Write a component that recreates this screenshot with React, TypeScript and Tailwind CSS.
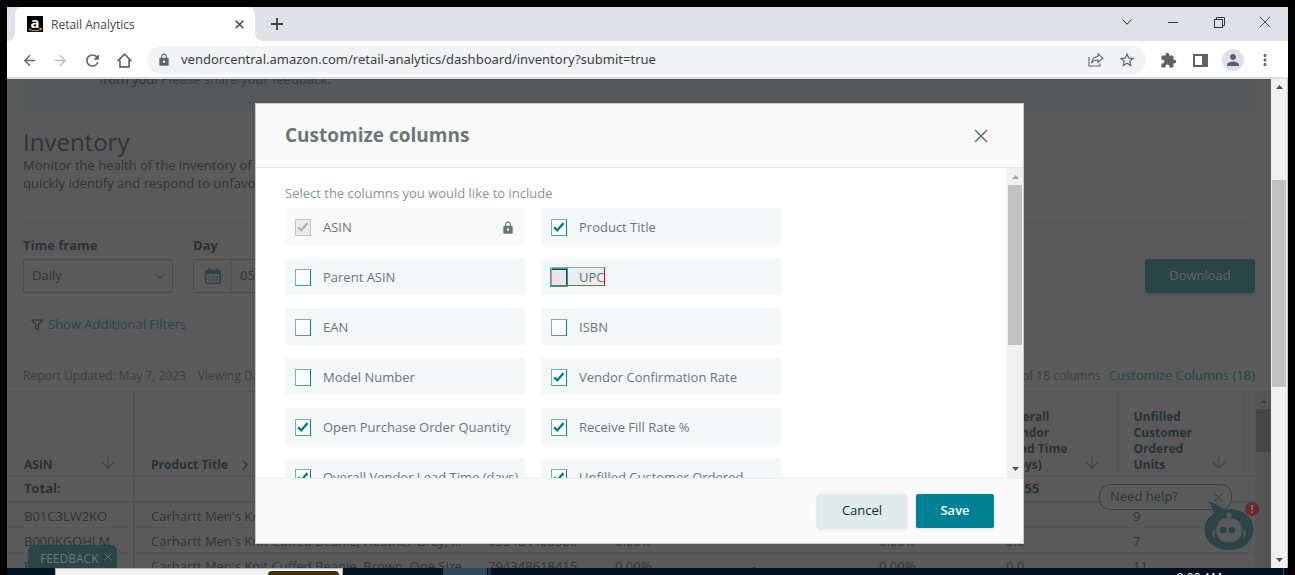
import React from "react";
import {
  MdArrowBack,
  MdArrowForward,
  MdRefresh,
  MdLock,
  MdStarBorder,
  MdExtension,
  MdPerson,
  MdMoreVert,
} from "react-icons/md";

type Option = { label: string; checked?: boolean; locked?: boolean; focused?: boolean };

const options: Option[] = [
  { label: "ASIN", checked: true, locked: true },
  { label: "Product Title", checked: true },
  { label: "Parent ASIN" },
  { label: "UPC", focused: true },
  { label: "EAN" },
  { label: "ISBN" },
  { label: "Model Number" },
  { label: "Vendor Confirmation Rate", checked: true },
  { label: "Open Purchase Order Quantity", checked: true },
  { label: "Receive Fill Rate %", checked: true },
  { label: "Overall Vendor Lead Time (days)", checked: true },
  { label: "Unfilled Customer Ordered", checked: true },
];

const rows: string[][] = [
  ["B01C3LW2KO", "Carhartt Men's Knit Cuffed Beanie", "", "", "", "", "", "9"],
  ["B000KGOHLM", "Carhartt Men's Knit Cuffed Beanie, Heather Grey, ...", "035484468586", "0.00%", "", "0.00%", "0.0", "7"],
  ["B002G9UDYG", "Carhartt Men's Knit Cuffed Beanie, Brown, One Size", "794348618415", "0.00%", "-", "0.00%", "0.0", "11"],
];

function Caret({ down = false, className = "" }: { down?: boolean; className?: string }) {
  return (
    <svg viewBox="0 0 7 4" className={`h-1 w-[7px] ${className}`} fill="currentColor" aria-hidden="true">
      {down ? <path d="M0 0h7L3.5 4z" /> : <path d="M0 4h7L3.5 0z" />}
    </svg>
  );
}

function Cross({ className = "" }: { className?: string }) {
  return (
    <svg viewBox="0 0 14 14" className={className} fill="none" stroke="currentColor" aria-hidden="true">
      <path d="M1 1l12 12M13 1L1 13" />
    </svg>
  );
}

function SortArrow() {
  return (
    <svg viewBox="0 0 14 14" className="mb-1 size-[14px] shrink-0 text-[#3f4647]" fill="none" stroke="currentColor" strokeWidth="1.2" aria-hidden="true">
      <path d="M7 .5v12.5M.8 7L7 13.2 13.2 7" />
    </svg>
  );
}

function TabStrip() {
  return (
    <div className="flex h-[34px] shrink-0 items-stretch bg-[#dee1e6]">
      <div className="relative ml-2 flex w-60 items-center rounded-t-lg bg-white pr-2 pl-3">
        <svg viewBox="0 0 8 8" className="absolute bottom-0 -left-2 size-2" fill="#fff" aria-hidden="true">
          <path d="M8 0v8H0a8 8 0 0 0 8-8z" />
        </svg>
        <svg viewBox="0 0 8 8" className="absolute -right-2 bottom-0 size-2" fill="#fff" aria-hidden="true">
          <path d="M0 0v8h8a8 8 0 0 1-8-8z" />
        </svg>
        <span className="relative flex size-4 items-center justify-center bg-black text-[15px] leading-none font-bold text-white">
          <span className="pb-1">a</span>
          <svg viewBox="0 0 16 16" className="absolute inset-0 size-4" fill="none" stroke="#f19a2c" strokeWidth="1.1" aria-hidden="true">
            <path d="M2 12.800c3.500 2.600 8.500 2.600 12 .3M12.200 12.300l2.200.2-.8 2" />
          </svg>
        </span>
        <span className="ml-2 grow pt-0.5 text-xs text-[#45494d]">Retail Analytics</span>
        <button type="button" aria-label="Close tab" className="flex size-4 items-center justify-center text-[#3c4043]">
          <Cross className="size-[9px] stroke-[2.2]" />
        </button>
      </div>
      <button type="button" aria-label="New tab" className="ml-3 flex w-5 items-center justify-center text-[#3c4043]">
        <svg viewBox="0 0 12 12" className="size-3" stroke="currentColor" strokeWidth="1.8" aria-hidden="true">
          <path d="M6 0v12M0 6h12" />
        </svg>
      </button>
      <div className="ml-auto flex items-center pb-1 text-[#33363a]">
        <button type="button" aria-label="Search tabs" className="flex w-[46px] justify-center">
          <svg viewBox="0 0 10 6" className="h-1.5 w-2.5" fill="none" stroke="currentColor" aria-hidden="true">
            <path d="M.5.5L5 5.300 9.500.5" />
          </svg>
        </button>
        <button type="button" aria-label="Minimize" className="flex w-[46px] justify-center">
          <span className="h-px w-2.5 bg-[#33363a]" />
        </button>
        <button type="button" aria-label="Restore" className="flex w-[46px] justify-center">
          <svg viewBox="0 0 11 11" className="size-[11px]" fill="none" stroke="currentColor" aria-hidden="true">
            <rect x=".5" y="2.500" width="8" height="8" />
            <path d="M2.500 2.500v-2h8v8h-2" />
          </svg>
        </button>
        <button type="button" aria-label="Close window" className="flex w-[46px] justify-center">
          <Cross className="size-3" />
        </button>
      </div>
    </div>
  );
}

function Toolbar() {
  return (
    <div className="flex h-[38px] shrink-0 items-center border-b-2 border-[#dcdddf] bg-white pt-0.5 pr-4 pl-[14px] text-[#5f6368]">
      <div className="flex items-center gap-4">
        <button type="button" aria-label="Back"><MdArrowBack className="size-[17px]" /></button>
        <button type="button" aria-label="Forward" className="-ml-0.5 text-[#b9bbbe]"><MdArrowForward className="size-[17px]" /></button>
        <button type="button" aria-label="Reload" className="-mx-0.5"><MdRefresh className="size-[19px]" /></button>
        <button type="button" aria-label="Home">
          <svg viewBox="0 0 16 16" className="size-[17px]" fill="none" stroke="currentColor" strokeWidth="1.500" aria-hidden="true">
            <path d="M1.500 8.500L8 2l6.500 6.500M3.700 7v7h8.600V7" />
          </svg>
        </button>
      </div>
      <div className="ml-[14px] flex h-7 grow items-center rounded-full bg-[#f1f3f4] px-2.5">
        <MdLock className="size-[14px]" />
        <input
          aria-label="Address"
          readOnly
          value="vendorcentral.amazon.com/retail-analytics/dashboard/inventory?submit=true"
          className="ml-2.5 grow bg-transparent font-['Noto_Sans',sans-serif] text-[13px] text-[#3c4043] outline-none"
        />
        <button type="button" aria-label="Share" className="mr-3.5">
          <svg viewBox="0 0 16 16" className="size-4" fill="none" stroke="currentColor" strokeWidth="1.100" aria-hidden="true">
            <path d="M1 5v9h11v-2.500M10 2l5 4.200-5 4.200V8C7 8 5 9 3.500 11.300 4 7.500 6.500 4.700 10 4.300z" />
          </svg>
        </button>
        <button type="button" aria-label="Bookmark"><MdStarBorder className="size-[18px]" /></button>
      </div>
      <div className="ml-3.5 flex items-center gap-4">
        <button type="button" aria-label="Extensions"><MdExtension className="size-[17px]" /></button>
        <button type="button" aria-label="Side panel">
          <svg viewBox="0 0 15 15" className="size-[15px]" aria-hidden="true">
            <path fill="currentColor" fillRule="evenodd" d="M0 1h15v13H0zM2 3v9h7V3z" />
          </svg>
        </button>
        <button type="button" aria-label="Profile" className="-mx-0.5 flex size-[22px] items-center justify-center rounded-full bg-[#dee1e6] text-[#56607a]">
          <MdPerson className="size-[18px]" />
        </button>
        <button type="button" aria-label="Menu" className="-mx-0.5"><MdMoreVert className="size-[18px]" /></button>
      </div>
    </div>
  );
}

function DataTable() {
  return (
    <div className="flex h-[200px] border-t border-[#525454]">
      <table className="w-full grow table-fixed border-collapse self-start text-left text-[13px]">
        <colgroup>
          <col className="w-[127px]" />
          <col />
          <col className="w-[127px]" />
          <col className="w-[137px]" />
          <col className="w-[127px]" />
          <col className="w-[127px]" />
          <col className="w-[127px]" />
          <col className="w-[127px]" />
          <col className="w-[11px]" />
        </colgroup>
        <thead className="text-xs leading-4 font-bold text-[#293335]">
          <tr className="h-[84px] border-b-2 border-[#525454] align-bottom">
            <th className="border-r-2 border-[#525454] pb-0.5 pl-[17px]">
              <span className="flex items-end justify-between pr-[18px]">ASIN <SortArrow /></span>
            </th>
            <th className="pb-0.5 pl-4">
              <span className="flex items-center gap-3.5">
                Product Title
                <svg viewBox="0 0 6 10" className="h-2.5 w-1.5 text-[#2b4448]" fill="none" stroke="currentColor" strokeWidth="1.600" aria-hidden="true">
                  <path d="M.8.8L5 5 .8 9.200" />
                </svg>
              </span>
            </th>
            <th /><th /><th /><th />
            <th className="border-r border-[#525454] pb-0.5 pl-4">
              <span className="flex items-end justify-between pr-[18px]">
                <span>Overall<br />Vendor<br />Lead Time<br />(days)</span>
                <SortArrow />
              </span>
            </th>
            <th className="border-r border-[#525454] pb-0.5 pl-4">
              <span className="flex items-end justify-between pr-[18px]">
                <span>Unfilled<br />Customer<br />Ordered<br />Units</span>
                <SortArrow />
              </span>
            </th>
            <th />
          </tr>
        </thead>
        <tbody className="text-[#2d3638]">
          <tr className="h-[26px] border-b-2 border-[#4e5151] font-bold text-[#293335]">
            <td className="border-r-2 border-[#525454] pl-[17px]">Total:</td>
            <td /><td /><td /><td /><td />
            <td className="pl-4">10.55</td>
            <td className="pl-4">31,880</td>
            <td />
          </tr>
          {rows.map((row) => (
            <tr key={row[0]} className="h-[25px] border-b border-[#545656]">
              {row.map((cell, i) => (
                <td
                  key={i}
                  className={
                    i === 0
                      ? "overflow-hidden border-r-2 border-[#525454] pt-1 pl-[17px] whitespace-nowrap"
                      : "overflow-hidden pt-1 pl-4 whitespace-nowrap"
                  }
                >
                  {cell}
                </td>
              ))}
              <td />
            </tr>
          ))}
        </tbody>
      </table>
      <div className="flex w-4 shrink-0 flex-col items-center bg-[#555555] pt-[7px]">
        <Caret className="text-[#3f3f3f]" />
        <div className="mt-[6px] h-[43px] w-[14px] bg-[#464646]" />
      </div>
    </div>
  );
}

function Dashboard() {
  return (
    <div className="min-w-0 grow overflow-hidden bg-[#5a5a5a] text-[#2d3638]">
      <div className="mx-4 -mt-5 h-[53px] bg-[#555859] pt-2.5 pl-[76px] text-[13px] leading-5">
        from you! <a href="#feedback" className="text-[#2b4448]">Please share your feedback.</a>
      </div>
      <div className="px-4">
        <h1 className="mt-4 text-2xl leading-7">Inventory</h1>
        <p className="text-[13px] leading-[18px]">
          Monitor the health of the inventory of your products to
          <br />
          quickly identify and respond to unfavorable changes.
        </p>
        <div className="mt-[31px] flex items-end border-t border-[#555757] pt-[11px]">
          <div className="w-[150px]">
            <label htmlFor="time-frame" className="block text-[13px] leading-5 font-bold text-[#293335]">Time frame</label>
            <div className="relative mt-1">
              <select id="time-frame" className="h-[34px] w-full appearance-none rounded-xs border border-[#474b4c] pl-2 text-[13px]">
                <option>Daily</option>
              </select>
              <svg viewBox="0 0 10 6" className="absolute top-3.5 right-2 h-1.5 w-2.5 text-[#3f4647]" fill="none" stroke="currentColor" strokeWidth="1.500" aria-hidden="true">
                <path d="M.5.5L5 5 9.500.5" />
              </svg>
            </div>
          </div>
          <div className="ml-5 w-[150px]">
            <label htmlFor="day" className="block text-[13px] leading-5 font-bold text-[#293335]">Day</label>
            <div className="mt-1 flex h-[34px] rounded-xs border border-[#474b4c]">
              <span className="flex w-[38px] shrink-0 items-center justify-center border-r border-[#4d5152]">
                <svg viewBox="0 0 16 16" className="size-4 text-[#2b4448]" fill="none" stroke="currentColor" aria-hidden="true">
                  <rect x=".8" y="2.500" width="14.400" height="12.700" rx="1.500" strokeWidth="1.500" />
                  <path strokeWidth="3" d="M1 4.500h14" />
                  <path strokeWidth="1.500" d="M4 0v3M12 0v3" />
                  <path strokeWidth="1.500" strokeDasharray="2 1.500" d="M3.500 9h9M3.500 12h9" />
                </svg>
              </span>
              <input id="day" readOnly value="05/07/2023" className="min-w-0 grow bg-transparent pl-2 text-[13px]" />
            </div>
          </div>
          <button type="button" className="ml-auto h-[34px] w-[110px] rounded-xs bg-[#2b4448] text-[13px] text-[#626566] shadow-sm">
            Download
          </button>
        </div>
        <button type="button" className="mt-5 ml-2 flex h-6 items-center gap-[5px] text-[13px] text-[#2b4448]">
          <svg viewBox="0 0 12 12" className="size-3 text-[#293335]" fill="none" stroke="currentColor" strokeWidth="1.200" aria-hidden="true">
            <path d="M.8 1h10.400L7.300 6v5L4.700 9.500V6z" />
          </svg>
          Show Additional Filters
        </button>
        <div className="mt-7 flex h-[22px] items-center text-[12px] text-[#3b4041]">
          <span>Report Updated: May 7, 2023</span>
          <span className="ml-3">Viewing Data</span>
          <span className="ml-auto">18 of 18 columns</span>
          <a href="#columns" className="ml-2 text-[13px] text-[#2b4448]">Customize Columns (18)</a>
        </div>
      </div>
      <div className="mt-1">
        <DataTable />
      </div>
    </div>
  );
}

function PageScrollbar() {
  return (
    <div className="flex w-[17px] shrink-0 flex-col items-center border-r border-[#c4c4c4] bg-[#f0f0f0] text-[#505050]">
      <Caret className="mt-1.5" />
      <div className="w-full basis-[91px]" />
      <div className="w-[14px] basis-[207px] bg-[#c1c1c1]" />
      <Caret down className="mt-auto mb-1.5" />
    </div>
  );
}

function ColumnOption({ option }: { option: Option }) {
  return (
    <label
      className={`relative flex h-[37px] items-center overflow-hidden pt-0.5 pl-[10px] text-[13px] whitespace-nowrap text-[#687778] ${
        option.locked ? "bg-[#fafafa]" : "bg-[#f4f8f9]"
      }`}
    >
      <input
        type="checkbox"
        defaultChecked={option.checked}
        disabled={option.locked}
        className={`h-[17px] w-4 shrink-0 appearance-none border ${
          option.locked
            ? "border-[#bcc4c5] bg-[#eaeded]"
            : option.focused
              ? "border-[#1d4b53] bg-[#f2f2f2] outline outline-[#4295a5]"
              : "border-t-[#6cb6c1] border-r-[#008296] border-b-[#3aa0ae] border-l-[#6cb6c1] bg-white"
        }`}
      />
      {option.checked && (
        <svg
          viewBox="0 0 16 17"
          className={`pointer-events-none absolute left-[10px] h-[17px] w-4 ${option.locked ? "text-[#aab7b8]" : "text-[#008296]"}`}
          fill="none"
          stroke="currentColor"
          strokeWidth="2.4"
          aria-hidden="true"
        >
          <path d="M3.200 8.300l3.100 3 6.200-7.200" />
        </svg>
      )}
      <span className="ml-3">{option.label}</span>
      {option.focused && (
        <span className="pointer-events-none absolute top-[9px] left-[10px] h-[19px] w-[54px] border border-t-[#f08a8a] border-r-[#ff0000] border-b-[#c04a4a] border-l-[#f08a8a] bg-black/4" />
      )}
      {option.locked && <MdLock className="mr-2.5 ml-auto size-[14px]" />}
    </label>
  );
}

function CustomizeDialog() {
  return (
    <section role="dialog" aria-labelledby="dialog-title" className="flex w-full max-w-[769px] flex-col border border-[#c9c9c9] bg-white">
      <header className="flex h-16 shrink-0 items-center justify-between border-b border-[#e3e5e5] bg-[#fafafa] pr-[35px] pl-[29px]">
        <h2 id="dialog-title" className="text-[19px] font-bold text-[#687778]">Customize columns</h2>
        <button type="button" aria-label="Close" className="text-[#5f7679]">
          <Cross className="size-[14px] stroke-[1.6]" />
        </button>
      </header>
      <div className="flex h-[310px] overflow-hidden">
        <div className="grow overflow-hidden pt-[15px] pl-[29px]">
          <p className="text-[13px] leading-5 text-[#879596]">Select the columns you would like to include</p>
          <div className="mt-[5px] grid w-[496px] grid-cols-2 gap-x-4 gap-y-[13px]">
            {options.map((o) => (
              <ColumnOption key={o.label} option={o} />
            ))}
          </div>
        </div>
        <div className="flex w-4 shrink-0 flex-col items-center bg-[#f0f0f0]">
          <Caret className="mt-[7px] text-[#a3a3a3]" />
          <div className="mt-1.5 h-40 w-[14px] bg-[#c1c1c1]" />
          <Caret down className="mt-auto mb-[7px] text-[#505050]" />
        </div>
      </div>
      <footer className="flex h-[65px] shrink-0 items-center justify-end gap-[9px] border-t border-[#ececec] bg-[#fafafa] pr-[29px]">
        <button type="button" className="h-[34px] w-[90px] rounded-xs bg-[#e2ebec] text-[13px] text-[#002f36] shadow-sm">Cancel</button>
        <button type="button" className="h-[34px] w-[78px] rounded-xs bg-[#008296] text-[13px] font-semibold text-white shadow-sm">Save</button>
      </footer>
    </section>
  );
}

function HelpWidget() {
  return (
    <div className="absolute right-[50px] bottom-[17px] h-[67px] w-[139px] text-[#2b4448]">
      <div className="flex h-[26px] w-[133px] items-center justify-between rounded-[11px] border border-[#2b4448] bg-[#5a5a5a] px-2.5 text-[13px] text-[#2d3638]">
        Need help?
        <button type="button" aria-label="Dismiss help" className="mr-[-2px]"><Cross className="size-[9px] stroke-[1.5]" /></button>
      </div>
      <svg viewBox="0 0 50 51" className="absolute -right-4 bottom-0 h-[51px] w-[50px]" aria-hidden="true">
        <path fill="#2b4448" d="M4 1.500c5 1.500 12 3.500 16 8.500 2-.6 4-.8 6-.8C40 9.200 49.500 18 49.500 29.500 49.500 41.500 39 50 25 50S.6 41.500.6 29.500C.6 23 4 17.500 10 13.800 9 8.500 7 4.500 4 1.500z" />
        <circle cx="25" cy="15" r="2.600" fill="#5a5a5a" />
        <path stroke="#5a5a5a" strokeWidth="1.600" d="M25 16v4" />
        <path fill="#5a5a5a" d="M25 18c8 0 12.500 4.500 12.800 12C38 38 33 42.500 25 42.500S12 38 12.200 30C12.500 22.500 17 18 25 18z" />
        <path fill="#5a5a5a" d="M10.800 29.500v9C7.500 37.500 7.500 30.500 10.800 29.500zM39.200 29.500v9c3.300-1 3.300-8 0-9z" />
        <circle cx="19.300" cy="30" r="3.200" fill="#2b4448" />
        <circle cx="28" cy="30" r="3.200" fill="#2b4448" />
      </svg>
      <span className="absolute top-[18px] -right-[21px] flex size-[14px] items-center justify-center rounded-full bg-[#6a2b2b] text-[11px] font-bold text-[#8a7a7a]">!</span>
    </div>
  );
}

function Taskbar() {
  return (
    <div className="flex h-[7px] shrink-0 overflow-hidden bg-[#00101f]">
      <div className="w-12 bg-[#001620]" />
      <div className="flex w-72 justify-end border border-b-0 border-[#b5b5b5] bg-[#f0f0f0] pt-0.5 pr-[3px]">
        <div className="w-[71px] rounded-t-md bg-[#443008]" />
      </div>
      <div className="w-[100px] bg-[#001620]" />
      <div className="w-11 bg-[#30485a]" />
      <div className="ml-px w-[3px] bg-[#22333f]" />
      <div className="ml-auto pt-0.5 pr-[61px] text-xs leading-4 text-white">9:00 AM</div>
      <div className="mr-1 w-px bg-[#4c5560]" />
    </div>
  );
}

export default function App() {
  return (
    <div className="flex h-screen flex-col overflow-hidden bg-black px-[7px] pt-[7px] font-['Open_Sans',sans-serif]">
      <TabStrip />
      <Toolbar />
      <main className="relative flex min-h-0 grow overflow-hidden">
        <Dashboard />
        <PageScrollbar />
        <button type="button" className="absolute bottom-0 left-[21px] flex h-[23px] w-[89px] items-center rounded-t-md bg-[#2b4448] pt-1 pl-3 text-xs text-[#66797c]">
          FEEDBACK
          <Cross className="mb-1 ml-1.5 size-2 stroke-[1.5]" />
        </button>
        <HelpWidget />
        <div className="absolute inset-y-0 right-4 left-0 flex items-center justify-center">
          <CustomizeDialog />
        </div>
      </main>
      <Taskbar />
    </div>
  );
}
